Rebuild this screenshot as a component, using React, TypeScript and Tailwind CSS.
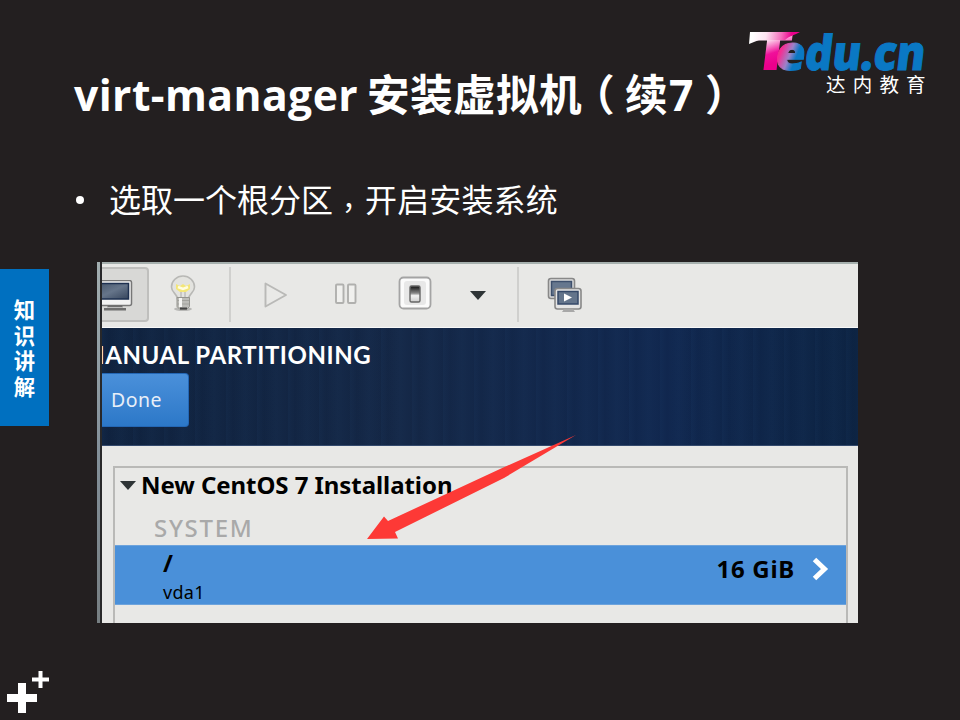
import React from "react";

const CJK = "font-['Open_Sans','Noto_Sans_CJK_SC',sans-serif]";
const HAN = "font-['Noto_Sans_CJK_SC',sans-serif]";

function Logo() {
  return (
    <svg width="200" height="84" viewBox="0 0 200 84" className="block">
      <defs>
        <linearGradient id="pinkBar" gradientUnits="userSpaceOnUse" x1="14" y1="12" x2="52" y2="18">
          <stop offset="0" stopColor="#ffffff" />
          <stop offset="0.35" stopColor="#fde3f1" />
          <stop offset="0.75" stopColor="#f56bbb" />
          <stop offset="1" stopColor="#ec008c" />
        </linearGradient>
        <linearGradient id="pinkT" gradientUnits="userSpaceOnUse" x1="10" y1="-40" x2="22" y2="-6">
          <stop offset="0" stopColor="#ffffff" />
          <stop offset="0.3" stopColor="#fde0f0" />
          <stop offset="0.7" stopColor="#f0109a" />
          <stop offset="1" stopColor="#ec008c" />
        </linearGradient>
        <linearGradient id="pinkE" x1="0" y1="0.2" x2="1" y2="0.8">
          <stop offset="0.25" stopColor="#f52d93" />
          <stop offset="0.5" stopColor="#9c82c8" />
          <stop offset="0.68" stopColor="#0a78c4" />
        </linearGradient>
      </defs>
      <text transform="translate(11 50) skewX(-7)" fontFamily="'Open Sans',sans-serif" fontWeight="800" fontSize="53" textLength="40" lengthAdjust="spacingAndGlyphs" fill="url(#pinkT)">T</text>
      <path d="M11 12H61C56 15 50 16 46 20L30 20L20 20L10 24z" fill="url(#pinkBar)" />
      <g fontFamily="'Open Sans',sans-serif" fontWeight="800" fontSize="48" strokeWidth="1">
        <text transform="translate(35 49.500) skewX(-7)" textLength="30" lengthAdjust="spacingAndGlyphs" fill="url(#pinkE)" stroke="url(#pinkE)">e</text>
        <text transform="translate(64.500 49.500) skewX(-7)" textLength="120" lengthAdjust="spacingAndGlyphs" fill="#0a78c4" stroke="#0a78c4">du.cn</text>
      </g>
      <text x="87" y="72" fontFamily="'Noto Sans CJK SC',sans-serif" fontSize="19.5" letterSpacing="7.2" fill="#fff">达内教育</text>
    </svg>
  );
}

function MonitorIcon() {
  return (
    <svg width="34" height="34" viewBox="0 0 34 34" className="block">
      <defs>
        <linearGradient id="scr" x1="0" y1="0" x2="1" y2="1">
          <stop offset="0" stopColor="#46556a" />
          <stop offset="0.5" stopColor="#66758a" />
          <stop offset="1" stopColor="#36455c" />
        </linearGradient>
      </defs>
      <rect x="-6" y="0.500" width="35.500" height="25" rx="2" fill="#f2f2f2" stroke="#777" strokeWidth="1.500" />
      <rect x="-6" y="3.500" width="32.500" height="15.500" fill="url(#scr)" stroke="#1e3050" strokeWidth="1.500" />
      <path d="M6 25h14l1 3h3v2.500H2V28h3z" fill="#6d6d6d" />
      <path d="M5 27.500h16" stroke="#bbb" />
    </svg>
  );
}

function BulbIcon() {
  return (
    <svg width="28" height="38" viewBox="0 0 28 38" className="block">
      <ellipse cx="14" cy="34" rx="9" ry="2" fill="#b8b8b6" />
      <path d="M8.500 24C8 18 2.500 18 2.500 12a11.500 11 0 0 1 23 0c0 6-5.500 6-6 12z" fill="#e3e3df" stroke="#b8b8b5" strokeWidth="1.600" />
      <path d="M7 9l4 2 3-2 3 2 4-2v5l-4 3h-6l-4-3z" fill="#f3e677" />
      <path d="M9 12l5 2 5-2" stroke="#fffde0" strokeWidth="2.500" fill="none" />
      <path d="M12 17v6M16 17v6" stroke="#aaa" />
      <path d="M8 22.500h12.500v9l-3 3h-6.500l-3-3z" fill="#bcbcb8" stroke="#94948f" />
      <path d="M8 25.500h12M8 29h12" stroke="#a2a29d" />
      <path d="M11.500 23v9" stroke="#f4f4f2" strokeWidth="3" />
      <path d="M11 33.500h7" stroke="#444" strokeWidth="2" />
    </svg>
  );
}

function SwitchIcon() {
  return (
    <svg width="34" height="34" viewBox="0 0 34 34" className="block">
      <defs>
        <linearGradient id="sw" x1="0" y1="0" x2="0" y2="1">
          <stop offset="0" stopColor="#111" />
          <stop offset="0.45" stopColor="#888" />
          <stop offset="0.6" stopColor="#f2f2f2" />
          <stop offset="1" stopColor="#ccc" />
        </linearGradient>
      </defs>
      <rect x="1.500" y="1.500" width="31" height="31" rx="4" fill="#fbfbfb" stroke="#a4a4a4" strokeWidth="1.800" />
      <rect x="6" y="5" width="22" height="24" rx="3" fill="#e8e8e8" />
      <rect x="12" y="10" width="10" height="16" rx="1.500" fill="url(#sw)" stroke="#666" strokeWidth="1.400" />
    </svg>
  );
}

function ScreensIcon() {
  return (
    <svg width="36" height="36" viewBox="0 0 36 36" className="block">
      <rect x="1.500" y="1.500" width="26" height="20" rx="2.500" fill="#dcdcdc" stroke="#888" strokeWidth="1.600" />
      <rect x="4.500" y="4.500" width="20" height="14" fill="#66778e" stroke="#3d4f6c" strokeWidth="1.500" />
      <rect x="8" y="11.500" width="26" height="20.500" rx="2.500" fill="#e4e4e4" stroke="#888" strokeWidth="1.600" />
      <rect x="11" y="14.500" width="20" height="12.500" fill="#63748b" stroke="#344868" strokeWidth="1.500" />
      <path d="M17 16.500l8 4-8 4z" fill="#fff" />
      <path d="M17 32h9l2 3H15z" fill="#a8a8a8" />
    </svg>
  );
}

function Toolbar() {
  return (
    <div className="flex h-[66px] w-full items-start border-b border-t-2 border-b-[#f8f8f8] border-t-[#a6b0ae] bg-[#e8e8e6]">
      <div className="mt-[3px] h-[55px] w-[47px] rounded-r-[4px] border-2 border-l-0 border-[#bfbfbd] bg-[#d8d8d6] pt-[11px]">
        <MonitorIcon />
      </div>
      <div className="ml-[20px] mt-[11px]"><BulbIcon /></div>
      <div className="ml-[32px] mt-[3px] h-[55px] w-[2px] bg-[#d0d0ce]" />
      <svg width="26" height="28" viewBox="0 0 26 28" className="ml-[33px] mt-[17px] block">
        <path d="M1.500 2.500v23L22 14z" fill="#e9e9e7" stroke="#b9b9b7" strokeWidth="1.900" strokeLinejoin="round" />
      </svg>
      <svg width="22" height="22" viewBox="0 0 22 22" className="ml-[45px] mt-[19px] block">
        <rect x="1" y="1.500" width="7.500" height="18.500" rx="1" fill="#f0f0ee" stroke="#b0b0ae" strokeWidth="1.900" />
        <rect x="13" y="1.500" width="7.500" height="18.500" rx="1" fill="#f0f0ee" stroke="#b0b0ae" strokeWidth="1.900" />
      </svg>
      <div className="ml-[41px] mt-[12px]"><SwitchIcon /></div>
      <svg width="16" height="9" viewBox="0 0 16 9" className="ml-[38px] mt-[27px] block"><path d="M0 0h16L8 9z" fill="#2e3436" /></svg>
      <div className="ml-[31px] mt-[3px] h-[55px] w-[2px] bg-[#d0d0ce]" />
      <div className="ml-[28px] mt-[13px]"><ScreensIcon /></div>
    </div>
  );
}

function Banner() {
  return (
    <div className="h-[118px] w-full overflow-hidden border-b border-[#33496c] bg-[repeating-linear-gradient(90deg,rgba(30,65,110,0.12)_0px,rgba(5,20,50,0.06)_7px,rgba(35,70,115,0.09)_19px,rgba(5,20,50,0.05)_31px),linear-gradient(90deg,#10233f,#152847_40%,#112850_75%,#0d2443)]">
      <div className="-ml-[20px] h-[45px] whitespace-nowrap pt-[12px] font-['Lato',sans-serif] text-[24px] font-bold leading-[30px] tracking-[0.55px] text-white">MANUAL PARTITIONING</div>
      <div className="h-[54px] w-[87px] rounded-r-[4px] border border-l-0 border-[#2467b5] bg-linear-to-b from-[#4a90da] to-[#2c78c8] pl-[9px] font-['Noto_Sans',sans-serif] text-[19.500px] leading-[51px] tracking-[0.5px] text-[#e8eff8]">Done</div>
    </div>
  );
}

function Partitions() {
  return (
    <div className="h-[177px] w-full bg-[#e8e8e6] pl-[11px] pr-[10px] pt-[20px]">
      <div className="h-[157px] border-2 border-b-0 border-[#b9b9b7] font-['Noto_Sans',sans-serif] text-black">
        <div className="flex h-[34px] items-center">
          <svg width="16" height="9" viewBox="0 0 16 9" className="ml-[5px] mr-[5px] block"><path d="M0 0h16L8 9z" fill="#2e3436" /></svg>
          <span className="whitespace-nowrap text-[24px] font-bold leading-[34px] tracking-[-0.06px]">New CentOS 7 Installation</span>
        </div>
        <div className="h-[43px] pl-[39px] pt-[8px] text-[24px] font-medium leading-[36px] tracking-[1.7px] text-[#a9a9a9]">SYSTEM</div>
        <div className="flex h-[60px] border-y border-[#6da3dc] bg-[#4a90d9]">
          <div className="pl-[48px]">
            <div className="h-[34px] text-[24px] font-bold leading-[34px]">/</div>
            <div className="text-[18px] leading-[24px] tracking-[0.3px]">vda1</div>
          </div>
          <div className="ml-auto flex h-[46px] items-center pr-[17px]">
            <span className="text-[24px] font-bold leading-[34px] tracking-[0.7px]">16 GiB</span>
            <svg width="17" height="25" viewBox="0 0 17 25" className="ml-[17px] block"><path d="M2.500 2.500l10 9.500-10 9.500" fill="none" stroke="#fff" strokeWidth="5" /></svg>
          </div>
        </div>
      </div>
    </div>
  );
}

export default function App() {
  return (
    <div className="relative flex h-[720px] w-[960px] flex-col overflow-hidden bg-[#231f20] text-white">
      <header className="flex h-[150px] shrink-0 pl-[74px]">
        <h1 className={`${CJK} flex w-[665px] shrink-0 whitespace-nowrap pt-[67px] text-[42.670px] font-bold leading-[56px]`}>
          <span className="w-[293px] shrink-0 tracking-[0.42px]">virt-manager</span>
          <span className="w-[205px] shrink-0 tracking-[0.35px]">安装虚拟机</span>
          <span className="w-[53px] shrink-0">（</span>
          <span className="w-[44px] shrink-0">续</span>
          <span className="w-[36px] shrink-0">7</span>
          <span className="w-[34px] shrink-0">）</span>
        </h1>
        <div className="pt-[20px]"><Logo /></div>
      </header>
      <div className={`${HAN} flex h-[112px] shrink-0 items-start pl-[76px] pt-[26px] text-[32px] leading-[44px]`}>
        <span className="mt-[20px] h-[8px] w-[8px] rounded-full bg-white" />
        <span className="ml-[25px] w-[224px]">选取一个根分区</span>
        <span className="w-[32px] pl-[9px] text-[28px]">，</span>
        <span className="tracking-[0.15px]">开启安装系统</span>
      </div>
      <div className="flex h-[361px] shrink-0">
        <aside className={`${HAN} mt-[7px] flex h-[157px] w-[49px] flex-col items-center bg-[#0070c0] pt-[27px] text-[21.330px] font-bold leading-[25.500px]`}>
          <span>知</span><span>识</span><span>讲</span><span>解</span>
        </aside>
        <div className="relative ml-[48px] flex w-[761px] overflow-hidden">
          <div className="w-[5px] border-r-2 border-r-[#28282a] bg-linear-to-b from-[#a2aeb0] via-[#84919b] to-[#777f83]" />
          <div className="flex flex-1 flex-col">
            <Toolbar />
            <Banner />
            <Partitions />
          </div>
          <svg width="216" height="110" viewBox="0 0 216 110" className="absolute left-[267px] top-[171px]">
            <path d="M3 106L20 83.500L24 88L136 36L212 2L140 45L31 99L34 105.500z" fill="#fd3936" />
          </svg>
        </div>
      </div>
      <footer className="flex flex-1 pl-[7px] pt-[48px]">
        <svg width="44" height="44" viewBox="0 0 44 44" className="block">
          <path d="M11 12h8v11h11v8H19v11h-8V31H0v-8h11z" fill="#fff" />
          <path d="M31.500 0h4v6.500H42v4h-6.500V17h-4v-6.500H25v-4h6.500z" fill="#fff" />
        </svg>
      </footer>
    </div>
  );
}
